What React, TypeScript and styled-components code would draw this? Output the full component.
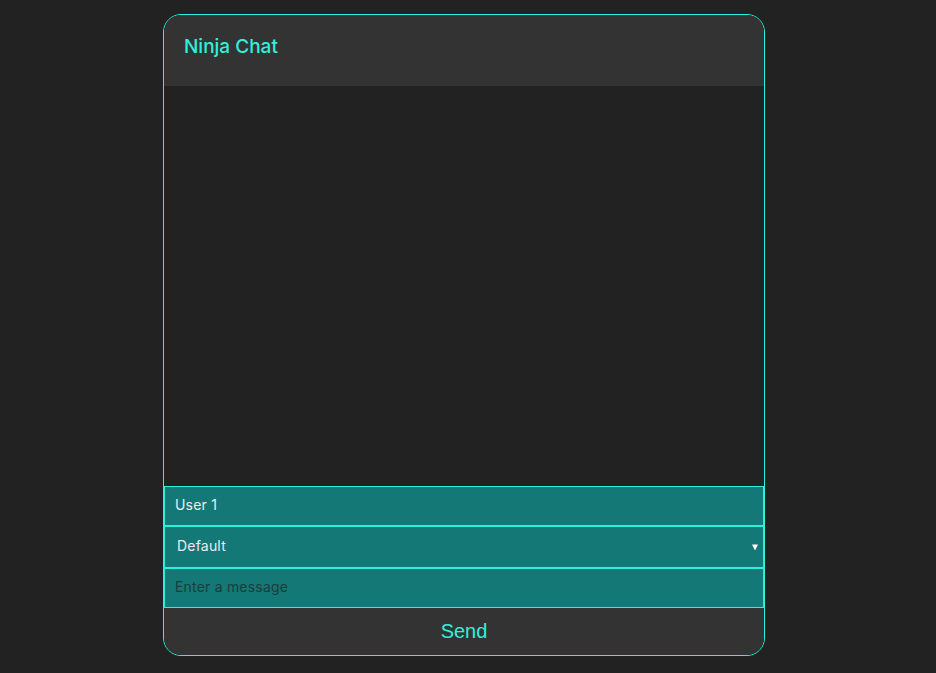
import React, { useState } from "react";
import styled, { createGlobalStyle } from "styled-components";

const accent = "#2ff0dc";
const fieldBg = "#147876";

const GlobalStyle = createGlobalStyle`
  html, body {
    margin: 0;
    background: #222222;
    font-family: Inter, "Noto Sans", sans-serif;
  }
`;

const Page = styled.div`
  display: flex;
  justify-content: center;
  align-items: flex-start;
  padding: 14px 8px 0 0;
  box-sizing: border-box;
`;

const ChatCard = styled.div`
  width: 600px;
  display: flex;
  flex-direction: column;
  border: 1px solid ${accent};
  border-radius: 18px;
  overflow: hidden;
  background: #222222;
`;

const Header = styled.header`
  height: 71px;
  background: #333333;
  display: flex;
  align-items: center;
  padding: 0 20px;
  box-sizing: border-box;
`;

const Title = styled.h1`
  margin: 0;
  font-size: 19px;
  font-weight: 500;
  color: ${accent};
  letter-spacing: 0;
  padding-bottom: 8px;
`;

const Messages = styled.div`
  height: 400px;
  background: #222222;
`;

const Field = styled.input`
  display: block;
  width: 100%;
  box-sizing: border-box;
  height: 40px;
  margin: 0;
  padding: 0 10px 4px;
  border: 1px solid ${accent};
  background: ${fieldBg};
  color: #ececec;
  font-family: Inter, "Noto Sans", sans-serif;
  font-size: 14px;
  letter-spacing: 0.2px;
  outline: none;

  &::placeholder {
    color: #1e3c3c;
  }
`;

const SelectWrap = styled.div`
  position: relative;
`;

const Select = styled.select`
  display: block;
  width: 100%;
  height: 42px;
  box-sizing: border-box;
  margin: 0;
  padding: 0 12px 4px;
  border: 1px solid ${accent};
  border-top: none;
  border-bottom: none;
  background: ${fieldBg};
  color: #ececec;
  font-family: Inter, "Noto Sans", sans-serif;
  font-size: 14px;
  letter-spacing: 0.2px;
  appearance: none;
  outline: none;
  box-shadow: inset 0 1px 0 ${accent}, inset 0 -1px 0 ${accent};
`;

const Arrow = styled.span`
  position: absolute;
  right: 6px;
  top: 50%;
  transform: translateY(-40%);
  width: 0;
  height: 0;
  border-left: 3px solid transparent;
  border-right: 3px solid transparent;
  border-top: 6px solid #ffffff;
  pointer-events: none;
`;

const SendButton = styled.button`
  height: 47px;
  border: none;
  background: #333333;
  color: ${accent};
  font-family: "Liberation Sans", Arial, sans-serif;
  font-size: 20px;
  cursor: pointer;
  padding: 0;
`;

export default function App() {
  const [user, setUser] = useState("User 1");
  const [message, setMessage] = useState("");

  return (
    <Page>
      <GlobalStyle />
      <ChatCard>
        <Header>
          <Title>Ninja Chat</Title>
        </Header>
        <Messages />
        <Field value={user} onChange={(e) => setUser(e.target.value)} />
        <SelectWrap>
          <Select defaultValue="default">
            <option value="default">Default</option>
          </Select>
          <Arrow />
        </SelectWrap>
        <Field
          placeholder="Enter a message"
          value={message}
          onChange={(e) => setMessage(e.target.value)}
        />
        <SendButton>Send</SendButton>
      </ChatCard>
    </Page>
  );
}
